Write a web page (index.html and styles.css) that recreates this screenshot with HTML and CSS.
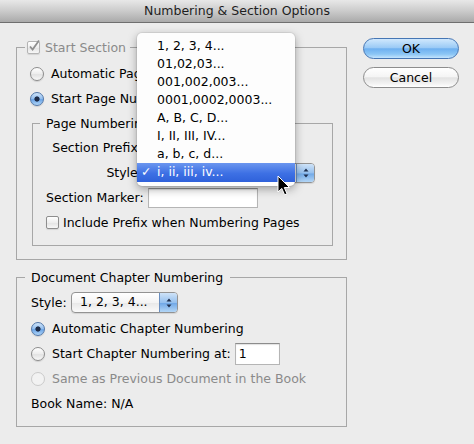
FILE: index.html
```html
<!DOCTYPE html>
<html lang="en">
<head>
    <meta charset="UTF-8">
    <title>Numbering &amp; Section Options</title>
    <link rel="stylesheet" href="styles.css">
</head>
<body>
    <!-- Window title -->
    <div class="titlebar">Numbering &amp; Section Options</div>

    <div class="dialog">
        <div class="main">
            <!-- Start Section group -->
            <fieldset class="group group-outer">
                <legend>
                    <span class="legend-inner">
                        <span class="checkbox disabled">
                            <svg viewBox="0 0 14 14"><path d="M3 7.5l2.6 3L12 1.5"/></svg>
                        </span>
                        <span class="dim">Start Section</span>
                    </span>
                </legend>
                <div class="row"><span class="radio"></span>Automatic Page Numbering</div>
                <div class="row"><span class="radio on"></span>Start Page Numbering at:</div>

                <fieldset class="group group-inner">
                    <legend><span class="legend-inner">Page Numbering</span></legend>
                    <div class="form-row">
                        <label class="form-label">Section Prefix:</label>
                        <span class="field field-wide"></span>
                    </div>
                    <div class="form-row">
                        <label class="form-label">Style:</label>
                        <span class="popup popup-style">
                            <span class="popup-text">i, ii, iii, iv...</span>
                            <span class="popup-arrows">
                                <svg viewBox="0 0 8 12"><path d="M4 1.5L6.5 4.5H1.5z M4 10.5L1.5 7.5H6.5z"/></svg>
                            </span>
                        </span>
                    </div>
                    <div class="form-row">
                        <label class="form-label">Section Marker:</label>
                        <span class="field field-wide"></span>
                    </div>
                    <div class="form-row">
                        <span class="checkbox"></span>
                        <span class="check-label">Include Prefix when Numbering Pages</span>
                    </div>
                </fieldset>
            </fieldset>

            <!-- Document Chapter Numbering group -->
            <fieldset class="group group-chapter">
                <legend><span class="legend-inner">Document Chapter Numbering</span></legend>
                <div class="row">
                    <span class="style-label">Style:</span>
                    <span class="popup popup-chapter">
                        <span class="popup-text">1, 2, 3, 4...</span>
                        <span class="popup-arrows">
                            <svg viewBox="0 0 8 12"><path d="M4 1.5L6.5 4.5H1.5z M4 10.5L1.5 7.5H6.5z"/></svg>
                        </span>
                    </span>
                </div>
                <div class="row row-first"><span class="radio on"></span>Automatic Chapter Numbering</div>
                <div class="row"><span class="radio"></span>Start Chapter Numbering at:<span class="field field-num">1</span></div>
                <div class="row dim"><span class="radio disabled"></span>Same as Previous Document in the Book</div>
                <div class="row">Book Name: N/A</div>
            </fieldset>
        </div>

        <div class="buttons">
            <button class="btn btn-default">OK</button>
            <button class="btn btn-cancel">Cancel</button>
        </div>
    </div>

    <!-- Open Style pop-up menu -->
    <div class="menu">
        <div class="menu-item">1, 2, 3, 4...</div>
        <div class="menu-item">01,02,03...</div>
        <div class="menu-item">001,002,003...</div>
        <div class="menu-item">0001,0002,0003...</div>
        <div class="menu-item">A, B, C, D...</div>
        <div class="menu-item">I, II, III, IV...</div>
        <div class="menu-item">a, b, c, d...</div>
        <div class="menu-item selected"><span class="menu-check">✓</span>i, ii, iii, iv...</div>
    </div>

    <!-- Mouse pointer -->
    <svg class="cursor" viewBox="0 0 14 22" width="14" height="22">
        <path d="M1 1V17L4.8 13.4L7.6 19.8L10 18.8L7.3 12.5H12.5Z"/>
    </svg>
</body>
</html>
```

FILE: styles.css
```css
* {
    margin: 0;
    padding: 0;
    box-sizing: border-box;
}

body {
    position: relative;
    width: 474px;
    height: 444px;
    overflow: hidden;
    background: #ececec;
    font-family: "DejaVu Sans", Verdana, sans-serif;
    font-size: 12.5px;
    color: #000;
}

.titlebar {
    height: 23px;
    line-height: 22px;
    text-align: center;
    color: #1e1e1e;
    background: linear-gradient(#e8e8e8, #cbcbcb 50%, #aaaaaa);
    border-bottom: 1px solid #6f6f6f;
}

.dialog {
    display: flex;
    align-items: flex-start;
    padding: 16px 0 0 16px;
}

.main {
    width: 331px;
}

.buttons {
    display: flex;
    flex-direction: column;
    gap: 8px;
    margin: -1px 0 0 16px;
}

/* Group boxes */
.group {
    border: 1px solid #a7a7a7;
    min-width: 0;
}

.group > legend {
    padding: 0 6px;
}

.legend-inner {
    display: flex;
    align-items: center;
    height: 16px;
    gap: 5px;
}

.group-outer {
    padding: 6px 13px 13px 13px;
}

.group-outer > legend {
    margin-left: -5px;
    padding: 0 4px 0 2px;
}

.group-inner {
    margin: 4px 0 0 2px;
    padding: 4px 0 10px 13px;
}

.group-inner > legend {
    margin-left: -6px;
}

.group-chapter {
    margin-top: 9px;
    padding: 5px 0 10px 14px;
}

.group-chapter > legend {
    margin-left: -6px;
    padding: 0 7px 0 6px;
}

.dim {
    color: #8a8a8a;
}

/* Rows */
.row {
    display: flex;
    align-items: center;
    gap: 7px;
    height: 25px;
    white-space: nowrap;
}

.row-first {
    margin-top: 1px;
}

.form-row {
    display: flex;
    align-items: center;
    height: 25px;
    white-space: nowrap;
}

.form-label {
    width: 96px;
    margin-right: 6px;
    text-align: right;
}

.check-label {
    margin-left: 4px;
}

.style-label {
    width: 40px;
    margin-right: -7px;
}

/* Controls */
.radio {
    flex: none;
    width: 14px;
    height: 14px;
    border-radius: 50%;
    border: 1px solid #8c8c8c;
    background: linear-gradient(#ffffff, #ececec 50%, #e2e2e2 55%, #f8f8f8);
    box-shadow: 0 1px 1px rgba(0, 0, 0, 0.12);
}

.radio.on {
    border-color: #5277a8;
    background:
        radial-gradient(circle, #1e2c48 0 2.2px, transparent 3px),
        linear-gradient(#cfe4f9, #8fbcee 50%, #6ba4e6 55%, #b0d5f7);
}

.radio.disabled {
    border-color: #cacaca;
    background: #f2f2f2;
    box-shadow: none;
}

.checkbox {
    flex: none;
    position: relative;
    width: 13px;
    height: 13px;
    border: 1px solid #8e8e8e;
    border-radius: 2px;
    background: linear-gradient(#ffffff, #eeeeee 50%, #e4e4e4 55%, #f7f7f7);
    box-shadow: 0 1px 1px rgba(0, 0, 0, 0.1);
}

.checkbox.disabled {
    border-color: #b4b4b4;
}

.checkbox svg {
    position: absolute;
    left: -1px;
    top: -3px;
    width: 14px;
    height: 14px;
    fill: none;
    stroke: #8f8f8f;
    stroke-width: 1.8;
}

.field {
    height: 20px;
    background: #fff;
    border: 1px solid #b5b5b5;
    border-top-color: #8c8c8c;
    box-shadow: inset 0 1px 1px rgba(0, 0, 0, 0.12);
}

.field-wide {
    width: 110px;
}

.field-num {
    width: 45px;
    height: 22px;
    margin-left: -3px;
    padding-left: 3px;
    line-height: 20px;
}

.popup {
    display: flex;
    height: 20px;
    border: 1px solid #939393;
    border-radius: 4px;
    background: linear-gradient(#ffffff, #f4f4f4 50%, #e9e9e9 55%, #fafafa);
    overflow: hidden;
    box-shadow: 0 1px 1px rgba(0, 0, 0, 0.1);
}

.popup-style {
    width: 167px;
}

.popup-chapter {
    width: 107px;
    height: 21px;
}

.popup-text {
    flex: 1;
    padding-left: 8px;
    line-height: 18px;
}

.popup-arrows {
    display: flex;
    align-items: center;
    justify-content: center;
    width: 18px;
    border-left: 1px solid #6a8fc0;
    background: linear-gradient(#cfe3f8, #95c0ee 50%, #72a9e7 55%, #b3d6f6);
}

.popup-arrows svg {
    width: 8px;
    height: 12px;
    fill: #1f2f4d;
}

/* Buttons */
.btn {
    width: 96px;
    height: 21px;
    border-radius: 11px;
    font: inherit;
    color: #000;
    line-height: 19px;
    text-align: center;
}

.btn-default {
    border: 1px solid #4676b4;
    background: linear-gradient(#d0e8fd, #9ccbf6 45%, #6eb0f0 52%, #8cc6f5 80%, #c4e4fd);
}

.btn-cancel {
    border: 1px solid #8d8d8d;
    background: linear-gradient(#ffffff, #f5f5f5 45%, #e3e3e3 52%, #f1f1f1 80%, #ffffff);
}

/* Open pop-up menu, drawn over the dialog */
.menu {
    position: absolute;
    left: 137px;
    top: 33px;
    width: 158px;
    padding: 4px 0;
    background: #fdfdfd;
    border-radius: 5px;
    box-shadow: 0 3px 10px rgba(0, 0, 0, 0.35), 0 0 0 1px rgba(0, 0, 0, 0.06);
}

.menu-item {
    position: relative;
    height: 18px;
    line-height: 18px;
    padding-left: 20px;
    white-space: nowrap;
}

.menu-item.selected {
    height: 19px;
    color: #fff;
    background: linear-gradient(#6b96ef, #3d70e4 55%, #2f61da);
}

.menu-check {
    position: absolute;
    left: 4px;
    font-weight: bold;
}

.cursor {
    position: absolute;
    left: 277px;
    top: 175px;
    fill: #000;
    stroke: #fff;
    stroke-width: 1;
}
```
